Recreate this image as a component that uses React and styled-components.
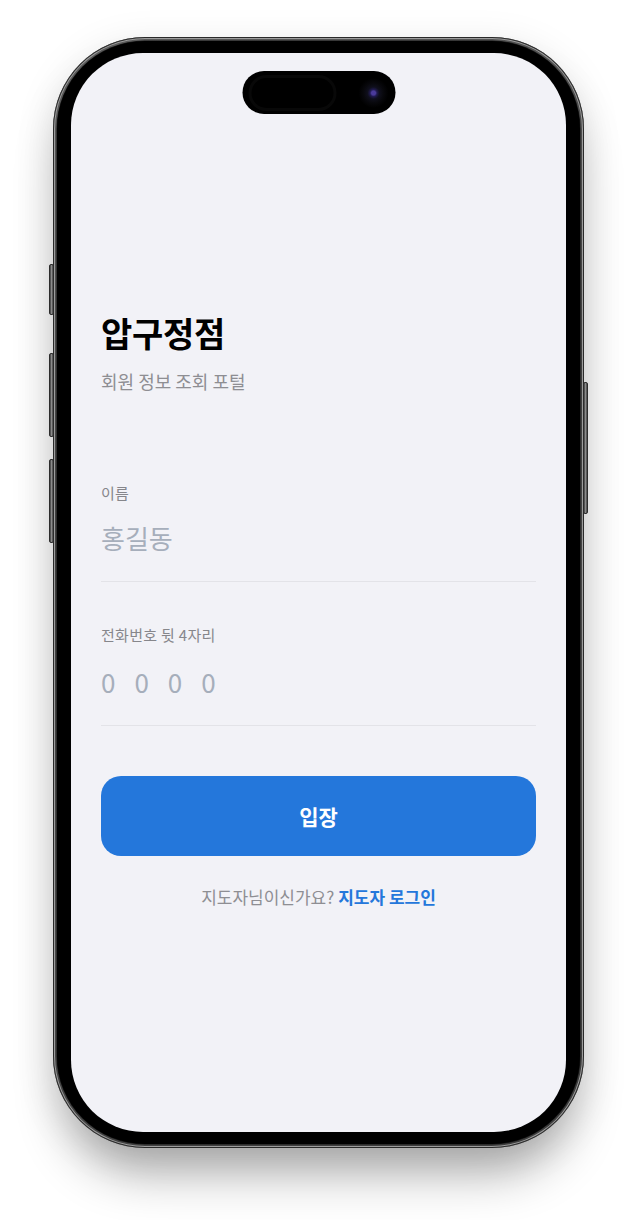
import React from "react";
import styled, { createGlobalStyle } from "styled-components";

const GlobalStyle = createGlobalStyle`
  html, body {
    margin: 0;
    padding: 0;
    background: #ffffff;
  }
  body {
    font-family: "Noto Sans CJK KR", "Noto Sans", sans-serif;
    -webkit-font-smoothing: antialiased;
  }
  * { box-sizing: border-box; }
`;

const Stage = styled.div`
  display: flex;
  justify-content: center;
  padding: 37px 0 72px;
`;

const Phone = styled.div`
  position: relative;
  width: 531px;
  height: 1111px;
  border-radius: 92px;
  padding: 4px;
  background: linear-gradient(160deg, #5c5c5c 0%, #3e3e3e 40%, #4a4a4a 70%, #3a3a3a 100%);
  box-shadow: 0 36px 50px -12px rgba(0, 0, 0, 0.32), 0 8px 40px rgba(0, 0, 0, 0.1),
    inset 0 0 0 1px #2a2a2a, inset 0 0 0 2px #9c9c9c;
`;

const SideButton = styled.div`
  position: absolute;
  top: ${p => p.top}px;
  ${p => (p.right ? "right: -4px;" : "left: -4px;")}
  width: 5px;
  height: ${p => p.h}px;
  border-radius: 2px;
  background: linear-gradient(90deg, #3a3a3a, #8a8a8a 50%, #444);
  border: 1px solid #2c2c2c;
`;

const Bezel = styled.div`
  height: 100%;
  border-radius: 88px;
  background: #000;
  padding: 12px 14px;
  box-shadow: 0 0 0 0.5px #1a1a1a;
`;

const Screen = styled.div`
  position: relative;
  height: 100%;
  border-radius: 72px;
  background: #f2f2f7;
  overflow: hidden;
`;

const Island = styled.div`
  position: absolute;
  top: 18px;
  left: 50%;
  transform: translateX(-50%);
  width: 153px;
  height: 43px;
  border-radius: 22px;
  background: #000;
  display: flex;
  align-items: center;
  justify-content: space-between;
  padding: 0 7px 0 6px;
`;

const Sensor = styled.div`
  width: 88px;
  height: 36px;
  border-radius: 18px;
  border: 3px solid #080808;
`;

const Camera = styled.div`
  width: 30px;
  height: 30px;
  border-radius: 50%;
  background: radial-gradient(circle, #4a3a9a 0 2px, #201a50 3.5px, #0f0f1c 6px, #08080c 10px, #000 15px);
`;

const Content = styled.div`
  display: flex;
  flex-direction: column;
  padding: 258px 30px 0;
`;

const Title = styled.h1`
  margin: 0;
  font-size: 34px;
  line-height: 44px;
  font-weight: 700;
  color: #000;
  letter-spacing: -0.3px;
`;

const Subtitle = styled.p`
  margin: 14px 0 0;
  font-size: 18px;
  line-height: 24px;
  color: #8e8e93;
`;

const Form = styled.div`
  display: flex;
  flex-direction: column;
  margin-top: 90px;
`;

const Field = styled.label`
  display: flex;
  flex-direction: column;
  border-bottom: 1px solid #e3e3e8;
  padding-bottom: 25px;
  margin-bottom: ${p => p.gap}px;
`;

const Label = styled.span`
  font-size: 15px;
  line-height: 20px;
  color: #86868b;
  letter-spacing: 0.3px;
`;

const Input = styled.input`
  margin-top: ${p => p.offset}px;
  border: none;
  outline: none;
  background: transparent;
  padding: 0;
  font-family: "Noto Sans CJK KR", "Noto Sans", sans-serif;
  font-size: ${p => p.size}px;
  line-height: 36px;
  height: 36px;
  letter-spacing: ${p => p.spacing || 0}px;
  color: #1c1c1e;
  &::placeholder {
    color: #a6aebb;
  }
`;

const EnterButton = styled.button`
  height: 80px;
  border: none;
  border-radius: 20px;
  background: #2477db;
  color: #fff;
  font-family: "Noto Sans CJK KR", "Noto Sans", sans-serif;
  font-size: 21px;
  font-weight: 700;
`;

const Footer = styled.p`
  margin: 30px 0 0;
  text-align: center;
  font-size: 17px;
  line-height: 22px;
  color: #8e8e93;
  a {
    color: #2477db;
    font-weight: 700;
    text-decoration: none;
  }
`;

function App() {
  return (
    <>
      <GlobalStyle />
      <Stage>
        <Phone>
          <SideButton top={227} h={51} />
          <SideButton top={316} h={84} />
          <SideButton top={422} h={84} />
          <SideButton right top={345} h={132} />
          <Bezel>
            <Screen>
              <Island>
                <Sensor />
                <Camera />
              </Island>
              <Content>
                <Title>압구정점</Title>
                <Subtitle>회원 정보 조회 포털</Subtitle>
                <Form>
                  <Field gap={43}>
                    <Label>이름</Label>
                    <Input offset={17} size={26} placeholder="홍길동" />
                  </Field>
                  <Field gap={50}>
                    <Label>전화번호 뒷 4자리</Label>
                    <Input offset={19} size={26} spacing={19} placeholder="0000" maxLength={4} inputMode="numeric" />
                  </Field>
                  <EnterButton>입장</EnterButton>
                  <Footer>
                    지도자님이신가요? <a href="#coach">지도자 로그인</a>
                  </Footer>
                </Form>
              </Content>
            </Screen>
          </Bezel>
        </Phone>
      </Stage>
    </>
  );
}

export default App;
